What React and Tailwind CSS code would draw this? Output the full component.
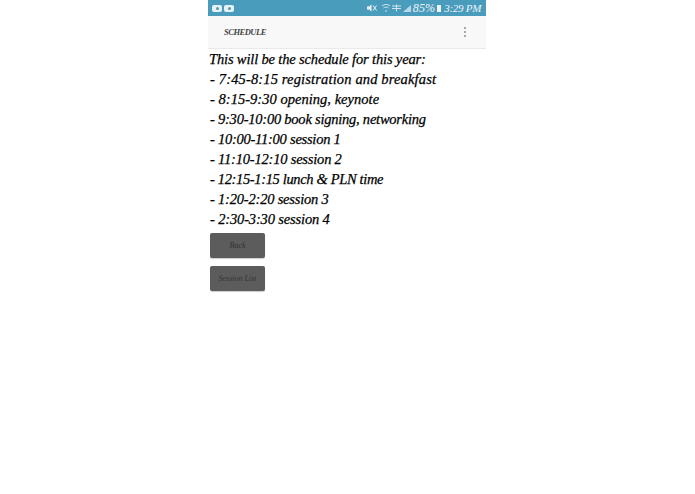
const lines = [
  ["This will be the schedule for this year:", "tracking-[-0.15px]"],
  ["- 7:45-8:15 registration and breakfast", "ml-px tracking-[0.15px]"],
  ["- 8:15-9:30 opening, keynote", "ml-px tracking-[0.03px]"],
  ["- 9:30-10:00 book signing, networking", "ml-px tracking-[-0.23px]"],
  ["- 10:00-11:00 session 1", "ml-px tracking-[-0.25px]"],
  ["- 11:10-12:10 session 2", "ml-px tracking-[-0.2px]"],
  ["- 12:15-1:15 lunch & PLN time", "ml-px tracking-[-0.35px]"],
  ["- 1:20-2:20 session 3", "ml-px tracking-[-0.2px]"],
  ["- 2:30-3:30 session 4", "ml-px tracking-[-0.15px]"],
];

function YouTubeBadge() {
  return (
    <div className="flex h-[7px] w-[10px] items-center justify-center rounded-[2px] bg-[#e8f2f6]">
      <div className="h-[3px] w-[3px] rounded-full bg-[#4a9cbd]" />
    </div>
  );
}

function StatusIcons() {
  return (
    <svg width="44" height="10" viewBox="0 0 44 10" fill="none" aria-hidden="true">
      <path d="M0 3.5h2l2.5-2v7l-2.5-2H0z" fill="#eef5f8" />
      <path d="M6 2.5l3.5 5M9.5 2.5L6 7.5" stroke="#eef5f8" strokeWidth="1" />
      <path d="M15 3c2.5-2 5.5-2 8 0M16.5 5c1.6-1.2 3.4-1.2 5 0" stroke="#cfe3ec" strokeWidth="1" />
      <path d="M18.5 7h1v2h-1z" fill="#cfe3ec" />
      <path d="M25 3h9M25 5.5h9M29.5 1.5v7" stroke="#d5e6ee" strokeWidth="1" />
      <path d="M36 9l8-7v7z" fill="#bcd8e4" />
    </svg>
  );
}

function Handwritten({ children, className = "" }) {
  return <span className={`font-['Liberation_Serif',serif] italic ${className}`}>{children}</span>;
}

export default function App() {
  return (
    <div className="h-[494px] w-[695px] overflow-hidden bg-white">
      <div className="ml-[208px] w-[278px]">
        <div className="flex h-4 items-center justify-between bg-[#4a9cbd] pl-1 pr-[5px]">
          <div className="flex gap-[2px]">
            <YouTubeBadge />
            <YouTubeBadge />
          </div>
          <div className="flex items-center">
            <StatusIcons />
            <Handwritten className="ml-[2px] text-[12px] leading-4 tracking-[0.2px] text-[#eef5f8]">85%</Handwritten>
            <div className="ml-[2px] h-[7px] w-1 bg-[#eef5f8]" />
            <Handwritten className="ml-[3px] text-[11px] leading-4 tracking-[-0.3px] text-[#eef5f8]">3:29 PM</Handwritten>
          </div>
        </div>

        <div className="-mb-px flex h-[33px] items-center justify-between border-b border-[#e9e9e9] bg-[#f8f8f8] pl-4 pr-5">
          <Handwritten className="text-[8.5px] font-bold tracking-[-0.5px] text-[#444]">SCHEDULE</Handwritten>
          <div className="flex flex-col gap-[2px]">
            <div className="h-[2px] w-[2px] bg-[#aaa]" />
            <div className="h-[2px] w-[2px] bg-[#aaa]" />
            <div className="h-[2px] w-[2px] bg-[#aaa]" />
          </div>
        </div>

        <div className="flex flex-col pl-px">
          {lines.map(([text, tracking]) => (
            <div key={text} className="h-5 whitespace-nowrap text-[14.5px] leading-5 text-black">
              <Handwritten className={`inline-block [-webkit-text-stroke:0.25px_black] ${tracking}`}>{text}</Handwritten>
            </div>
          ))}
        </div>

        <div className="ml-[2px] mt-[5px] flex flex-col gap-2">
          {["Back", "Session List"].map((label) => (
            <button
              key={label}
              className="flex h-[25px] w-[55px] items-center justify-center rounded-[2px] bg-[#5c5c5c] shadow-[0_1px_1px_rgba(0,0,0,0.2)]"
            >
              <Handwritten className="text-[8px] text-[#333]">{label}</Handwritten>
            </button>
          ))}
        </div>
      </div>
    </div>
  );
}
